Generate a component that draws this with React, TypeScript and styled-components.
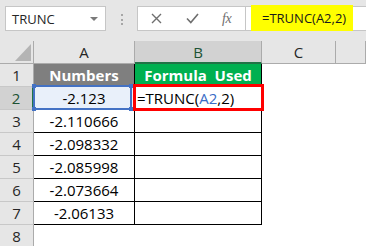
import React from "react";
import styled, { createGlobalStyle } from "styled-components";

const Global = createGlobalStyle`
  html, body { margin: 0; padding: 0; background: #ffffff; }
  body { font-family: "Open Sans", "Liberation Sans", sans-serif; }
  #root { width: 366px; height: 246px; }
`;

const Frame = styled.div`
  width: 366px;
  height: 246px;
  overflow: hidden;
  display: flex;
  flex-direction: column;
  background: #ffffff;
`;

const Toolbar = styled.div`
  flex: none;
  height: 41px;
  box-sizing: border-box;
  padding: 6px 0 0 5px;
  background: #e6e6e6;
  display: flex;
  align-items: flex-start;
`;

const NameBox = styled.div`
  width: 101px;
  height: 25px;
  box-sizing: border-box;
  background: #ffffff;
  border: 1px solid #c6c6c6;
  display: flex;
  align-items: center;
  justify-content: space-between;
  padding: 0 6px 0 6px;
  font-size: 13px;
  color: #262626;
`;

const Caret = styled.span`
  width: 0;
  height: 0;
  border-left: 4px solid transparent;
  border-right: 4px solid transparent;
  border-top: 4px solid #7a7a7a;
  margin-right: 1px;
`;

const Grip = styled.div`
  width: 2px;
  margin: 8px 14px 0 15px;
  display: flex;
  flex-direction: column;
  gap: 2.5px;
`;

const GripDot = styled.span`
  width: 2px;
  height: 2px;
  background: #a6a6a6;
`;

const FnBox = styled.div`
  width: 109px;
  height: 25px;
  box-sizing: border-box;
  background: #ffffff;
  border: 1px solid #c6c6c6;
  display: flex;
  align-items: center;
  padding-left: 13px;
`;

const FnIcon = styled.span<{ $gap: number }>`
  display: flex;
  align-items: center;
  margin-right: ${(p) => p.$gap}px;
  color: #6e6e6e;
`;

const Fx = styled.span`
  font-family: "Liberation Serif", "DejaVu Serif", serif;
  font-style: italic;
  font-size: 14px;
  color: #6e6e6e;
  letter-spacing: -0.5px;
`;

const FormulaBar = styled.div`
  flex: 1;
  height: 25px;
  box-sizing: border-box;
  background: #ffffff;
  border-top: 1px solid #c6c6c6;
  border-bottom: 1px solid #c6c6c6;
  padding-left: 5px;
  display: flex;
  align-items: flex-start;
`;

const Highlight = styled.div`
  width: 102px;
  height: 26px;
  margin-top: -2px;
  box-sizing: border-box;
  background: #ffff00;
  padding-left: 11px;
  display: flex;
  align-items: center;
  font-size: 13px;
  color: #1a1a1a;
`;

const Sheet = styled.div`
  display: grid;
  grid-template-columns: 34px 101px 127px 74px 30px;
  grid-auto-rows: 23px;
`;

const Corner = styled.div`
  position: relative;
  box-sizing: border-box;
  background: #e6e6e6;
  border-right: 1px solid #ababab;
  border-bottom: 1px solid #ababab;
  &::after {
    content: "";
    position: absolute;
    right: 2px;
    bottom: 2px;
    width: 0;
    height: 0;
    border-left: 16px solid transparent;
    border-bottom: 17px solid #b4b4b4;
  }
`;

const ColHead = styled.div<{ $active?: boolean }>`
  box-sizing: border-box;
  background: ${(p) => (p.$active ? "#d2d2d2" : "#e6e6e6")};
  border-right: 1px solid #ababab;
  border-bottom: ${(p) => (p.$active ? "2px solid #217346" : "1px solid #ababab")};
  display: flex;
  align-items: center;
  justify-content: center;
  font-size: 15px;
  color: ${(p) => (p.$active ? "#1d5234" : "#262626")};
`;

const RowHead = styled.div<{ $active?: boolean }>`
  box-sizing: border-box;
  background: ${(p) => (p.$active ? "#d2d2d2" : "#e6e6e6")};
  border-right: ${(p) => (p.$active ? "2px solid #217346" : "1px solid #ababab")};
  border-bottom: 1px solid #c8c8c8;
  display: flex;
  align-items: center;
  justify-content: center;
  font-size: 15px;
  color: ${(p) => (p.$active ? "#1d5234" : "#262626")};
`;

const Cell = styled.div<{ $fill?: string; $boxed?: boolean; $head?: boolean; $left?: boolean }>`
  position: relative;
  box-sizing: border-box;
  background: ${(p) => p.$fill ?? "#ffffff"};
  border-right: ${(p) => (p.$boxed ? "1px solid #000000" : "none")};
  border-bottom: ${(p) => (p.$boxed ? "1px solid #000000" : "none")};
  display: flex;
  align-items: center;
  justify-content: ${(p) => (p.$left ? "flex-start" : "center")};
  padding-left: ${(p) => (p.$left ? "2px" : "0")};
  font-size: 15px;
  font-weight: ${(p) => (p.$head ? 700 : 400)};
  color: ${(p) => (p.$head ? "#ffffff" : "#000000")};
  white-space: pre;
`;

const RefBox = styled.div`
  position: absolute;
  z-index: 2;
  left: -1px;
  top: -2px;
  right: 2px;
  bottom: -1px;
  border: 2px solid #4472c4;
  pointer-events: none;
`;

const RefHandle = styled.span<{ $x: "left" | "right"; $y: "top" | "bottom" }>`
  position: absolute;
  width: 4px;
  height: 4px;
  background: #4472c4;
  ${(p) => p.$x}: -3px;
  ${(p) => p.$y}: -3px;
`;

const ActiveBox = styled.div`
  position: absolute;
  z-index: 3;
  left: -2px;
  top: -3px;
  right: -3px;
  bottom: -2px;
  border: 3px solid #ff0000;
  pointer-events: none;
`;

const Ref = styled.span`
  color: #3a6cc6;
`;

const values = ["-2.110666", "-2.098332", "-2.085998", "-2.073664", "-2.06133"];

export default function App() {
  return (
    <>
      <Global />
      <Frame>
        <Toolbar>
          <NameBox>
            <span>TRUNC</span>
            <Caret />
          </NameBox>
          <Grip>
            <GripDot />
            <GripDot />
            <GripDot />
          </Grip>
          <FnBox>
            <FnIcon $gap={24}>
              <svg width="11" height="11" viewBox="0 0 11 11">
                <path d="M1 1 L10 10 M10 1 L1 10" stroke="#6e6e6e" strokeWidth="1.4" fill="none" />
              </svg>
            </FnIcon>
            <FnIcon $gap={23}>
              <svg width="13" height="11" viewBox="0 0 13 11">
                <path d="M1 5.5 L4.8 9.5 L12 1" stroke="#6e6e6e" strokeWidth="1.6" fill="none" />
              </svg>
            </FnIcon>
            <Fx>fx</Fx>
          </FnBox>
          <FormulaBar>
            <Highlight>=TRUNC(A2,2)</Highlight>
          </FormulaBar>
        </Toolbar>
        <Sheet>
          <Corner />
          <ColHead>A</ColHead>
          <ColHead $active>B</ColHead>
          <ColHead>C</ColHead>
          <ColHead />

          <RowHead>1</RowHead>
          <Cell $fill="#7f7f7f" $head $boxed>Numbers</Cell>
          <Cell $fill="#00b050" $head $boxed>{"Formula  Used"}</Cell>
          <Cell />
          <Cell />

          <RowHead $active>2</RowHead>
          <Cell $fill="#e9f0fa" $boxed>
            -2.123
            <RefBox>
              <RefHandle $x="left" $y="top" />
              <RefHandle $x="right" $y="top" />
              <RefHandle $x="left" $y="bottom" />
              <RefHandle $x="right" $y="bottom" />
            </RefBox>
          </Cell>
          <Cell $boxed $left>
            =TRUNC(<Ref>A2</Ref>,2)
            <ActiveBox />
          </Cell>
          <Cell />
          <Cell />

          {values.map((v, i) => (
            <React.Fragment key={v}>
              <RowHead>{i + 3}</RowHead>
              <Cell $boxed>{v}</Cell>
              <Cell $boxed />
              <Cell />
              <Cell />
            </React.Fragment>
          ))}

          <RowHead>8</RowHead>
          <Cell />
          <Cell />
          <Cell />
          <Cell />
        </Sheet>
      </Frame>
    </>
  );
}
